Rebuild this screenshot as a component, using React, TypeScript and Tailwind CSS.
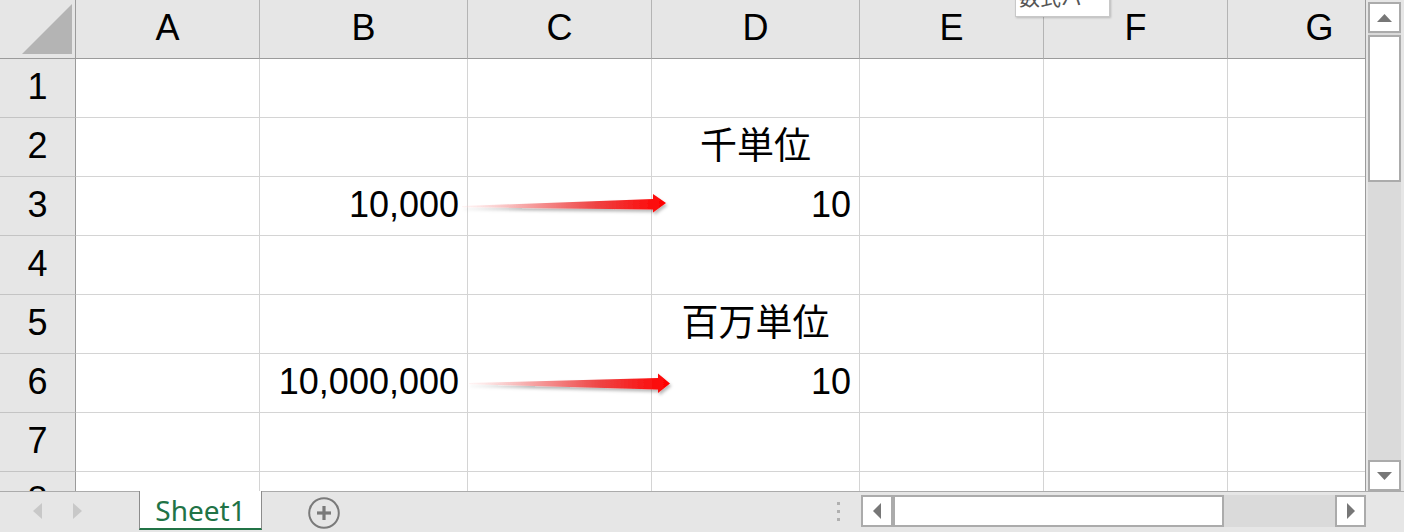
import React from 'react';

type Col = { l: string; w: string };
const cols: Col[] = [
  { l: 'A', w: 'w-[184px]' },
  { l: 'B', w: 'w-[208px]' },
  { l: 'C', w: 'w-[184px]' },
  { l: 'D', w: 'w-[208px]' },
  { l: 'E', w: 'w-[184px]' },
  { l: 'F', w: 'w-[184px]' },
  { l: 'G', w: 'w-[184px]' },
];

type CellVal = { t: string; align: 'r' | 'c'; jp?: boolean };
const data: Record<string, CellVal> = {
  '2D': { t: '千単位', align: 'c', jp: true },
  '3B': { t: '10,000', align: 'r' },
  '3D': { t: '10', align: 'r' },
  '5D': { t: '百万単位', align: 'c', jp: true },
  '6B': { t: '10,000,000', align: 'r' },
  '6D': { t: '10', align: 'r' },
};

const rows = [1, 2, 3, 4, 5, 6, 7, 8];

function Tri({ dir }: { dir: 'up' | 'down' | 'left' | 'right' }) {
  if (dir === 'up')
    return (
      <svg width="15" height="8" viewBox="0 0 15 8">
        <polygon points="0,8 15,8 7.5,0" fill="#777" />
      </svg>
    );
  if (dir === 'down')
    return (
      <svg width="15" height="8" viewBox="0 0 15 8">
        <polygon points="0,0 15,0 7.5,8" fill="#777" />
      </svg>
    );
  if (dir === 'left')
    return (
      <svg width="8" height="16" viewBox="0 0 8 16">
        <polygon points="8,0 8,16 0,8" fill="#777" />
      </svg>
    );
  return (
    <svg width="8" height="16" viewBox="0 0 8 16">
      <polygon points="0,0 0,16 8,8" fill="#777" />
    </svg>
  );
}

export default function App() {
  return (
    <div className="relative w-[1404px] h-[532px] overflow-hidden bg-[#e6e6e6] font-['Liberation_Sans','Noto_Sans_CJK_JP',sans-serif] text-black">
      <div className="flex h-[491px]">
        {/* Sheet */}
        <div className="relative w-[1366px] h-[491px] shrink-0 overflow-hidden bg-white border-r border-r-[#9b9b9b]">
          {/* header row */}
          <div className="flex h-[59px]">
            <div className="w-[76px] h-[59px] shrink-0 border-r border-b border-r-[#9b9b9b] border-b-[#9b9b9b] bg-[#e6e6e6]">
              <svg width="75" height="58" viewBox="0 0 75 58">
                <polygon points="22,54 72,54 72,4" fill="#b4b4b4" />
              </svg>
            </div>
            {cols.map((c) => (
              <div
                key={c.l}
                className={`${c.w} h-[59px] shrink-0 flex items-center justify-center bg-[#e6e6e6] border-b border-b-[#9b9b9b] border-r border-r-[#b4b4b4] text-[36px] leading-none pb-[2px]`}
              >
                {c.l}
              </div>
            ))}
          </div>
          {rows.map((r) => (
            <div key={r} className="flex h-[59px]">
              <div className="w-[76px] h-[59px] shrink-0 flex items-center justify-center bg-[#e6e6e6] border-r border-b border-r-[#9b9b9b] border-b-[#c4c4c4] text-[36px] leading-none pb-[2px]">
                {r}
              </div>
              {cols.map((c) => {
                const v = data[`${r}${c.l}`];
                return (
                  <div
                    key={c.l}
                    className={`${c.w} h-[59px] shrink-0 flex items-center border-b border-b-[#d4d4d4] border-r border-r-[#d4d4d4] ${
                      v && v.align === 'r' ? 'justify-end pr-[8px]' : 'justify-center'
                    } ${v && v.jp ? 'text-[37px]' : 'text-[36px]'} leading-none whitespace-nowrap pb-[2px]`}
                  >
                    {v ? v.t : ''}
                  </div>
                );
              })}
            </div>
          ))}

          {/* arrows (drawing objects) */}
          <svg
            className="absolute left-0 top-0 pointer-events-none"
            width="1366"
            height="491"
            viewBox="0 0 1366 491"
          >
            <defs>
              <linearGradient id="g1" x1="462" y1="0" x2="666" y2="0" gradientUnits="userSpaceOnUse">
                <stop offset="0" stopColor="#ffd0d0" stopOpacity="0.2" />
                <stop offset="0.3" stopColor="#f7a8a8" />
                <stop offset="0.65" stopColor="#ee4444" />
                <stop offset="1" stopColor="#ff0000" />
              </linearGradient>
              <linearGradient id="g2" x1="469" y1="0" x2="670" y2="0" gradientUnits="userSpaceOnUse">
                <stop offset="0" stopColor="#ffd0d0" stopOpacity="0.2" />
                <stop offset="0.3" stopColor="#f7a8a8" />
                <stop offset="0.65" stopColor="#ee4444" />
                <stop offset="1" stopColor="#ff0000" />
              </linearGradient>
              <filter id="sh" x="-10%" y="-100%" width="120%" height="300%">
                <feDropShadow dx="1.5" dy="2.5" stdDeviation="1.8" floodColor="#000" floodOpacity="0.28" />
              </filter>
            </defs>
            <polygon
              points="462,206 653,199 653,194 666,203 653,212.5 653,209.5 462,207.2"
              fill="url(#g1)"
              filter="url(#sh)"
            />
            <polygon
              points="469,383 658,378 658,373.5 670,383.5 658,393 658,389.5 469,384.2"
              fill="url(#g2)"
              filter="url(#sh)"
            />
          </svg>

          {/* tooltip */}
          <div className="absolute left-[1015px] top-[-10px] w-[95px] h-[27px] bg-white border border-[#c8c8c8] shadow-[1px_1px_2px_rgba(0,0,0,0.2)] overflow-hidden">
            <div className="pl-[3px] -mt-[5px] text-[21px] leading-[21px] text-[#555] font-['Noto_Sans_CJK_JP',sans-serif] whitespace-nowrap">
              数式バー
            </div>
          </div>
        </div>

        {/* vertical scrollbar */}
        <div className="w-[38px] h-[491px] flex flex-col pl-[2px] pt-[2px]">
          <div className="w-[33px] h-[31px] border-2 border-[#ababab] bg-white flex items-center justify-center">
            <Tri dir="up" />
          </div>
          <div className="w-[33px] flex-1 bg-[#dadada] pt-[2px]">
            <div className="w-[33px] h-[147px] border-2 border-[#ababab] bg-white" />
          </div>
          <div className="w-[33px] h-[31px] border-2 border-[#ababab] bg-white flex items-center justify-center">
            <Tri dir="down" />
          </div>
        </div>
      </div>

      {/* bottom bar */}
      <div className="flex items-start h-[41px] border-t border-[#ababab] bg-[#e6e6e6]">
        <div className="ml-[33px] mt-[11px]">
          <svg width="9" height="16" viewBox="0 0 9 16">
            <polygon points="9,0 9,16 0,8" fill="#c8c8c8" />
          </svg>
        </div>
        <div className="ml-[31px] mt-[11px]">
          <svg width="9" height="16" viewBox="0 0 9 16">
            <polygon points="0,0 0,16 9,8" fill="#c8c8c8" />
          </svg>
        </div>
        <div className="ml-[57px] -mt-px w-[123px] h-[39px] bg-white border-x border-[#8c8c8c] border-b-2 border-b-[#217346] flex items-center justify-center">
          <span className="text-[28px] leading-none text-[#217346] font-['Noto_Sans',sans-serif]">Sheet1</span>
        </div>
        <div className="ml-[46px] mt-[5px]">
          <svg width="32" height="32" viewBox="0 0 32 32">
            <circle cx="16" cy="16" r="14.8" fill="none" stroke="#7a7a7a" strokeWidth="2" />
            <line x1="16" y1="9" x2="16" y2="23" stroke="#7a7a7a" strokeWidth="3.2" />
            <line x1="9" y1="16" x2="23" y2="16" stroke="#7a7a7a" strokeWidth="3.2" />
          </svg>
        </div>
        <div className="ml-[497px] mt-[10px] flex flex-col gap-[5px]">
          <div className="w-[3px] h-[3px] bg-[#b0b0b0]" />
          <div className="w-[3px] h-[3px] bg-[#b0b0b0]" />
          <div className="w-[3px] h-[3px] bg-[#b0b0b0]" />
        </div>
        <div className="ml-[21px] mt-[3px] flex h-[32px]">
          <div className="w-[32px] h-[32px] border-2 border-[#ababab] bg-white flex items-center justify-center">
            <Tri dir="left" />
          </div>
          <div className="w-[331px] h-[32px] border-2 border-[#ababab] bg-white" />
          <div className="w-[111px] h-[32px] bg-[#dadada]" />
          <div className="w-[31px] h-[32px] border-2 border-[#ababab] bg-white flex items-center justify-center">
            <Tri dir="right" />
          </div>
        </div>
      </div>
    </div>
  );
}
